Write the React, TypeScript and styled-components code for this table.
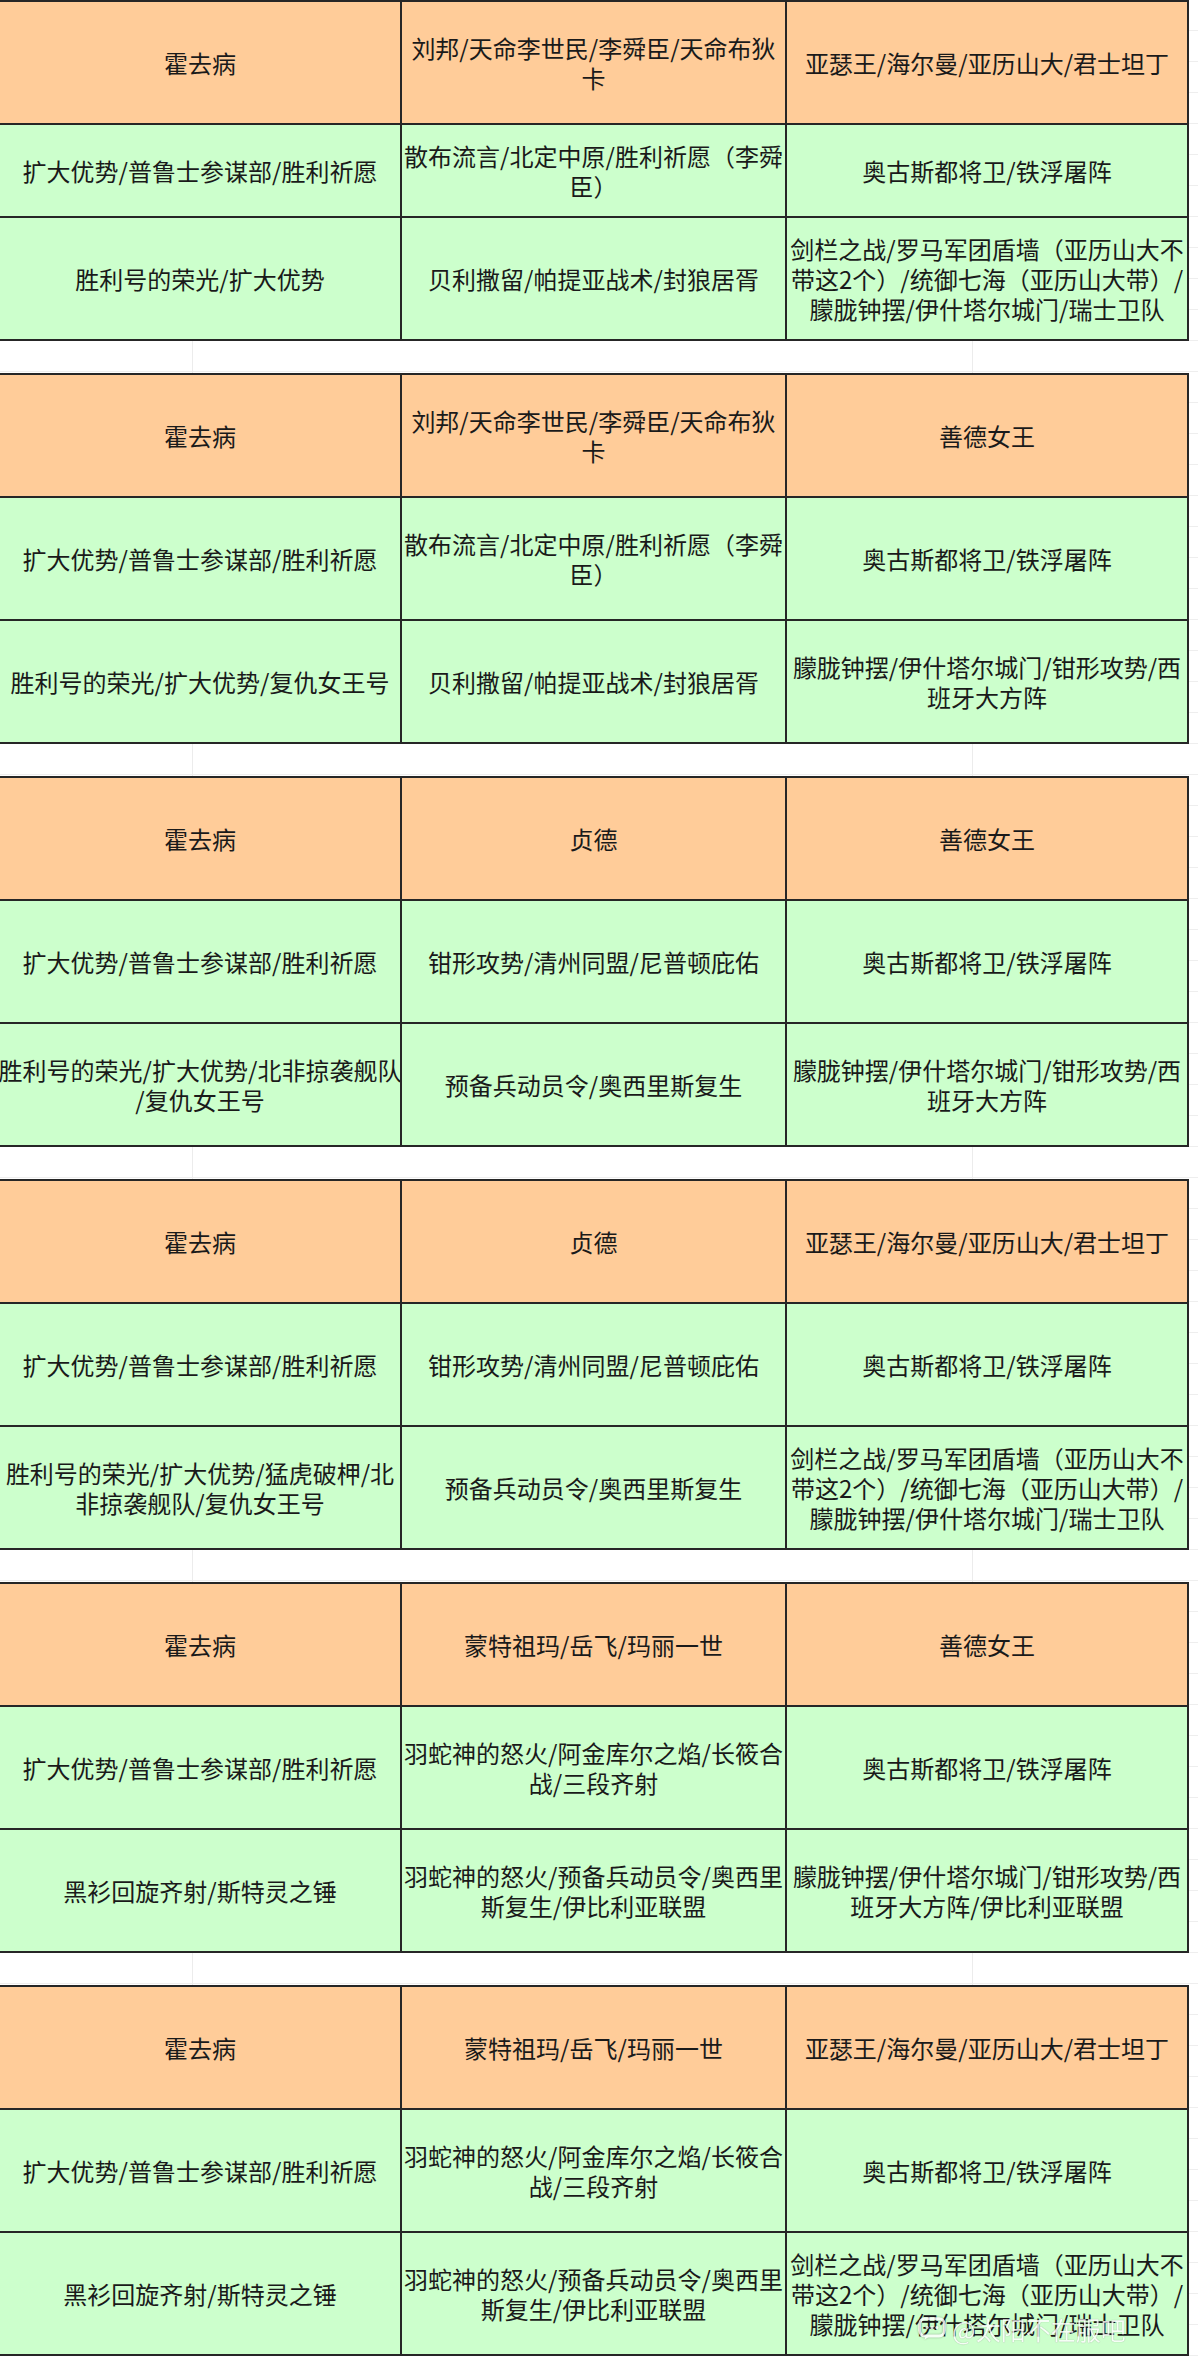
import styled, { createGlobalStyle } from "styled-components";

type Plan = {
    rows: string,
    cells: string[][]
}

const HEAD_A = "亚瑟王/海尔曼/亚历山大/君士坦丁";
const HEAD_B = "善德女王";
const LIU = "刘邦/天命李世民/李舜臣/天命布狄\n卡";
const MONT = "蒙特祖玛/岳飞/玛丽一世";
const EXPAND = "扩大优势/普鲁士参谋部/胜利祈愿";
const AUG = "奥古斯都将卫/铁浮屠阵";
const SAN = "散布流言/北定中原/胜利祈愿（李舜\n臣）";
const PINCER = "钳形攻势/清州同盟/尼普顿庇佑";
const FEATHER = "羽蛇神的怒火/阿金库尔之焰/长筱合\n战/三段齐射";
const SWORD = "剑栏之战/罗马军团盾墙（亚历山大不\n带这2个）/统御七海（亚历山大带）/\n朦胧钟摆/伊什塔尔城门/瑞士卫队";
const PENDULUM = "朦胧钟摆/伊什塔尔城门/钳形攻势/西\n班牙大方阵";
const RESERVE = "预备兵动员令/奥西里斯复生";
const FEATHER2 = "羽蛇神的怒火/预备兵动员令/奥西里\n斯复生/伊比利亚联盟";

const plans: Plan[] = [
    {
        rows: "123px 93px 123px",
        cells: [
            ["霍去病", LIU, HEAD_A],
            [EXPAND, SAN, AUG],
            ["胜利号的荣光/扩大优势", "贝利撒留/帕提亚战术/封狼居胥", SWORD],
        ],
    },
    {
        rows: "123px 123px 123px",
        cells: [
            ["霍去病", LIU, HEAD_B],
            [EXPAND, SAN, AUG],
            ["胜利号的荣光/扩大优势/复仇女王号", "贝利撒留/帕提亚战术/封狼居胥", PENDULUM],
        ],
    },
    {
        rows: "123px 123px 123px",
        cells: [
            ["霍去病", "贞德", HEAD_B],
            [EXPAND, PINCER, AUG],
            ["胜利号的荣光/扩大优势/北非掠袭舰队\n/复仇女王号", RESERVE, PENDULUM],
        ],
    },
    {
        rows: "123px 123px 123px",
        cells: [
            ["霍去病", "贞德", HEAD_A],
            [EXPAND, PINCER, AUG],
            ["胜利号的荣光/扩大优势/猛虎破柙/北\n非掠袭舰队/复仇女王号", RESERVE, SWORD],
        ],
    },
    {
        rows: "123px 123px 123px",
        cells: [
            ["霍去病", MONT, HEAD_B],
            [EXPAND, FEATHER, AUG],
            ["黑衫回旋齐射/斯特灵之锤", FEATHER2, PENDULUM + "/伊比利亚联盟"],
        ],
    },
    {
        rows: "123px 123px 123px",
        cells: [
            ["霍去病", MONT, HEAD_A],
            [EXPAND, FEATHER, AUG],
            ["黑衫回旋齐射/斯特灵之锤", FEATHER2, SWORD],
        ],
    },
];

const App = () => {
    return (
        <Page>
            <GlobalStyle/>
            {plans.map((plan, i) => (
                <Block key={i} $rows={plan.rows}>
                    {plan.cells.map((row, r) =>
                        row.map((text, c) => (
                            <Cell key={r + "-" + c} $head={r === 0}>
                                <CellText>{text}</CellText>
                            </Cell>
                        ))
                    )}
                </Block>
            ))}
            <Watermark>
                <BubbleIcon viewBox="0 0 26 22">
                    <rect x="1.5" y="1.5" width="23" height="16" rx="5" fill="none" stroke="white" strokeWidth="2.6"/>
                    <path d="M7 17.5 L6 21 L11 17.5" fill="white"/>
                    <circle cx="8.5" cy="9.5" r="1.4" fill="white"/>
                    <circle cx="13" cy="9.5" r="1.4" fill="white"/>
                    <circle cx="17.5" cy="9.5" r="1.4" fill="white"/>
                </BubbleIcon>
                <WatermarkText>@太阳不在服吧</WatermarkText>
            </Watermark>
        </Page>
    );
}

const GlobalStyle = createGlobalStyle`
    body {
        margin: 0;
        background-color: #ffffff;
        background-image:
            linear-gradient(to right, transparent 192px, #ececec 192px, #ececec 193px, transparent 193px),
            linear-gradient(to right, transparent 972px, #ececec 972px, #ececec 973px, transparent 973px),
            repeating-linear-gradient(to bottom, transparent 0, transparent 30px, #eeeeee 30px, #eeeeee 31px);
        font-family: "Noto Sans CJK SC", "Noto Sans", sans-serif;
    }
`

const Page = styled.div`
    position: relative;
    width: 1198px;
    height: 2356px;
    overflow: hidden;
    display: flex;
    flex-direction: column;
    gap: 32px;
`

const Block = styled.div<{ $rows: string }>`
    display: grid;
    grid-template-columns: 402px 385px 402px;
    grid-template-rows: ${p => p.$rows};
    width: 1189px;
    flex-shrink: 0;
    border-top: 2px solid #262626;
`

const Cell = styled.div<{ $head: boolean }>`
    box-sizing: border-box;
    display: flex;
    align-items: center;
    justify-content: center;
    overflow: hidden;
    background: ${p => p.$head ? "#ffcc99" : "#ccffcc"};
    border-right: 2px solid #262626;
    border-bottom: 2px solid #262626;
`

const CellText = styled.span`
    flex-shrink: 0;
    white-space: pre;
    text-align: center;
    font-size: 24px;
    line-height: 30px;
    color: #1a1a1a;
`

const Watermark = styled.div`
    position: absolute;
    left: 918px;
    top: 2314px;
    display: flex;
    align-items: center;
    gap: 6px;
    opacity: 0.82;
`

const BubbleIcon = styled.svg`
    width: 28px;
    height: 24px;
    filter: drop-shadow(0 0 1px rgba(0, 0, 0, 0.35));
`

const WatermarkText = styled.span`
    font-size: 25px;
    line-height: 30px;
    color: #ffffff;
    text-shadow: 0 0 1px rgba(0, 0, 0, 0.45);
`

export default App;
